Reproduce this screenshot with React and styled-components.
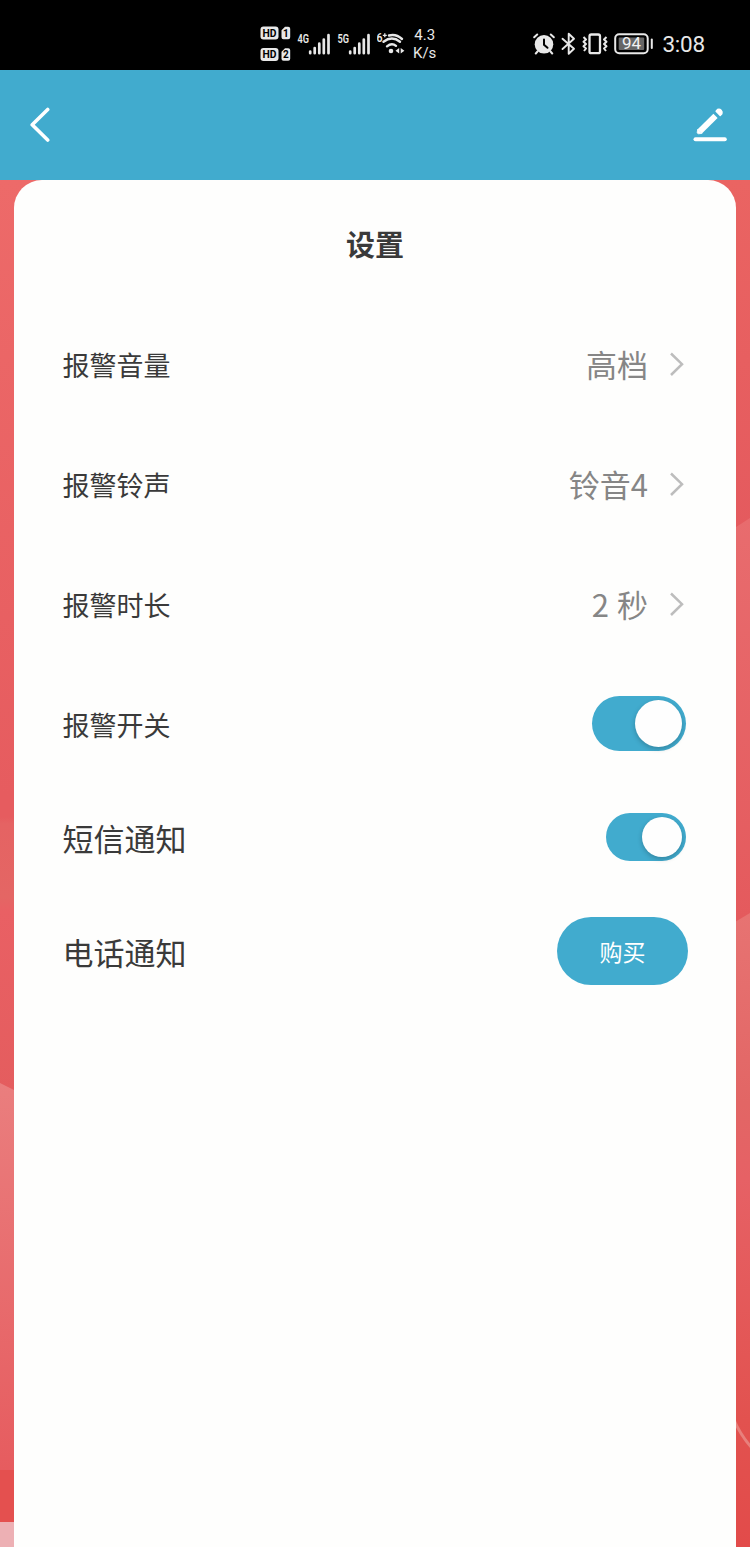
import React from "react";
import styled, { createGlobalStyle } from "styled-components";

const rows = [
  { label: "报警音量", value: "高档" },
  { label: "报警铃声", value: "铃音4" },
  { label: "报警时长", value: "2 秒", spacing: 1 },
];

const SimBadges = () => (
  <svg width="31" height="36" viewBox="0 0 31 36">
    {[1, 2].map((n, i) => (
      <g key={n} transform={`translate(0 ${i * 21.5})`}>
        <rect x="0.5" y="0.5" width="18" height="13" rx="3" fill="#e8e8e8" />
        <text
          x="9.5"
          y="10.900"
          fontSize="11.500"
          fontWeight="700"
          textAnchor="middle"
          textLength="14"
          lengthAdjust="spacingAndGlyphs"
          fill="#000"
        >
          HD
        </text>
        <path
          d="M25 0.800h3.200a2 2 0 0 1 2 2v8.400a2 2 0 0 1-2 2h-4.700a2 2 0 0 1-2-2V4.300z"
          fill="#e8e8e8"
        />
        <text x="25.900" y="10.700" fontSize="10" fontWeight="700" textAnchor="middle" fill="#000">
          {n}
        </text>
      </g>
    ))}
  </svg>
);

const Signal = ({ network }) => (
  <svg width="34" height="24" viewBox="0 0 34 24">
    <text
      x="0.500"
      y="10.500"
      fontSize="12"
      fontWeight="600"
      textLength="11.500"
      lengthAdjust="spacingAndGlyphs"
      fill="#e8e8e8"
    >
      {network}
    </text>
    <path
      d="M13.200 19.500v1.700M17.700 16v5.200M22.300 11.700v9.500M26.800 7.500v13.700M31.500 3.200v18"
      stroke="#e8e8e8"
      strokeWidth="2.700"
      strokeLinecap="round"
    />
  </svg>
);

const Wifi = () => (
  <svg width="29" height="24" viewBox="0 0 29 24" fill="none" stroke="#e8e8e8">
    <text
      x="-0.500"
      y="9.800"
      fontSize="12"
      fontWeight="600"
      textLength="6"
      lengthAdjust="spacingAndGlyphs"
      fill="#e8e8e8"
      stroke="none"
    >
      6
    </text>
    <path d="M5.800 3.300h4M7.800 1.300v4" strokeWidth="1.300" />
    <path d="M12 3.500Q19 1.500 25 7" strokeWidth="2.400" strokeLinecap="round" />
    <path d="M6.500 9.700Q15 3.300 23 9.700" strokeWidth="2.400" strokeLinecap="round" />
    <path d="M10 14.300Q14.800 10.300 19 13.800" strokeWidth="2.400" strokeLinecap="round" />
    <circle cx="14" cy="19" r="2.300" fill="#e8e8e8" stroke="none" />
    <path d="M22.200 16v5.400l-3.700-2.700zM23.700 16v5.400l3.700-2.700z" fill="#e8e8e8" stroke="none" />
  </svg>
);

const Alarm = () => (
  <svg width="22" height="22" viewBox="0 0 22 22" fill="none" stroke="#e8e8e8" strokeLinecap="round">
    <circle cx="11" cy="11.300" r="9.300" fill="#e8e8e8" stroke="none" />
    <path d="M1.200 4.300 4.200 1.500M20.800 4.300 17.800 1.500M4.500 18.500 2.800 20.500M17.500 18.500 19.200 20.500" strokeWidth="2" />
    <path d="M11 6.500v5.300l3.500 3" stroke="#000" strokeWidth="2" />
  </svg>
);

const Bluetooth = () => (
  <svg
    width="15"
    height="24"
    viewBox="0 0 15 24"
    fill="none"
    stroke="#e8e8e8"
    strokeWidth="1.900"
    strokeLinejoin="round"
    strokeLinecap="round"
  >
    <path d="M1.500 6.800 13 16.800 7.700 21.800V1.700L13 6.800 1.500 17" />
  </svg>
);

const Vibrate = () => (
  <svg width="26" height="22" viewBox="0 0 26 22" fill="none" stroke="#e8e8e8" strokeLinejoin="round">
    <rect x="7.500" y="1.500" width="10.500" height="18.700" rx="1.800" strokeWidth="2.300" />
    <path d="M1.500 4 4 6.500 1.500 8.800 4 11 1.500 13.300 4 15.500 2 18" strokeWidth="2" />
    <path d="M24.500 4 22 6.500 24.500 8.800 22 11 24.500 13.300 22 15.500 24 18" strokeWidth="2" />
  </svg>
);

const Battery = () => (
  <svg width="40" height="22" viewBox="0 0 40 22">
    <rect x="1.200" y="1.200" width="32.500" height="19" rx="4" fill="none" stroke="#e8e8e8" strokeWidth="2" />
    <rect x="4.700" y="4.500" width="25.500" height="12.500" rx="1" fill="#666" />
    <text
      x="17.400"
      y="16.300"
      fontSize="16"
      fontWeight="400"
      textAnchor="middle"
      textLength="19"
      lengthAdjust="spacingAndGlyphs"
      fill="#f2f2f2"
    >
      94
    </text>
    <path d="M37.800 6.500v8.500" stroke="#e8e8e8" strokeWidth="2" strokeLinecap="round" />
  </svg>
);

const BackIcon = () => (
  <svg width="24" height="36" viewBox="0 0 24 36" fill="none">
    <path d="M19.700 3.500 4.200 18.700 19.700 34" stroke="#fff" strokeWidth="3.600" strokeLinecap="round" strokeLinejoin="round" />
  </svg>
);

const EditIcon = () => (
  <svg width="34" height="36" viewBox="0 0 34 36" fill="none" stroke="#fff">
    <path d="M6.800 25.300 22.500 9.800" strokeWidth="6" />
    <path d="M4.700 23.200 8.900 27.400 5.500 27.800Q4.200 27.500 4.200 26.500z" fill="#fff" strokeWidth="0.800" strokeLinejoin="round" />
    <path d="M23.100 5.300 27.200 9.400 28.900 7.700A3.300 3.300 0 0 0 24.600 3.500z" fill="#fff" strokeWidth="1.400" strokeLinejoin="round" />
    <path d="M2.500 33.300h29.300" strokeWidth="4" strokeLinecap="round" />
  </svg>
);

const ChevronIcon = () => (
  <svg width="16" height="26" viewBox="0 0 16 26" fill="none">
    <path d="M2 2.500 13 13.200 2 24" stroke="#bdbdbd" strokeWidth="2.500" />
  </svg>
);

const WallpaperArt = () => (
  <Wallpaper viewBox="0 0 750 1367" preserveAspectRatio="none">
    <defs>
      <linearGradient id="left" x1="0" y1="0" x2="0" y2="1">
        <stop offset="0" stopColor="#ed6a69" />
        <stop offset="0.450" stopColor="#e65c5f" />
        <stop offset="0.466" stopColor="#e65c5f" />
        <stop offset="0.471" stopColor="#e56363" />
        <stop offset="0.525" stopColor="#e46664" />
        <stop offset="0.535" stopColor="#e96064" />
        <stop offset="0.670" stopColor="#e45d5e" />
      </linearGradient>
      <linearGradient id="leftHill" x1="0" y1="0" x2="0" y2="1">
        <stop offset="0" stopColor="#ea7e7e" />
        <stop offset="1" stopColor="#e65c5f" />
      </linearGradient>
      <linearGradient id="right" x1="0" y1="0" x2="0" y2="1">
        <stop offset="0" stopColor="#ea6462" />
        <stop offset="1" stopColor="#e45a5e" />
      </linearGradient>
      <linearGradient id="rightMid" x1="0" y1="0" x2="0" y2="1">
        <stop offset="0" stopColor="#e86c6e" />
        <stop offset="1" stopColor="#e4595c" />
      </linearGradient>
      <linearGradient id="rightLow" x1="0" y1="0" x2="0" y2="1">
        <stop offset="0" stopColor="#e77372" />
        <stop offset="0.300" stopColor="#e26665" />
        <stop offset="0.420" stopColor="#e66165" />
        <stop offset="0.800" stopColor="#e2524f" />
        <stop offset="1" stopColor="#e24b4a" />
      </linearGradient>
    </defs>
    <rect width="375" height="1367" fill="url(#left)" />
    <path d="M0 903 14 910 375 1090V1290H0z" fill="url(#leftHill)" />
    <rect y="1290" width="375" height="53" fill="#e4504f" />
    <rect y="1342" width="375" height="25" fill="#edb0b4" />
    <rect x="375" width="375" height="360" fill="url(#right)" />
    <path d="M730 351 750 338V760H730z" fill="url(#rightMid)" />
    <path d="M730 745 750 733V1367H730z" fill="url(#rightLow)" />
    <path d="M734 1240Q741 1256 752 1268" stroke="#e8807c" strokeWidth="3" fill="none" />
  </Wallpaper>
);

const App = () => {
  return (
    <Screen>
      <GlobalStyle />
      <StatusBar>
        <StatusGroup>
          <SimBadges />
          <Signal network="4G" />
          <Signal network="5G" />
          <Wifi />
          <Speed>
            <span>4.3</span>
            <span>K/s</span>
          </Speed>
        </StatusGroup>
        <StatusGroup>
          <Alarm />
          <Bluetooth />
          <Vibrate />
          <Battery />
          <Clock>3:08</Clock>
        </StatusGroup>
      </StatusBar>
      <Header>
        <IconButton aria-label="返回">
          <BackIcon />
        </IconButton>
        <IconButton aria-label="编辑">
          <EditIcon />
        </IconButton>
      </Header>
      <Content>
        <WallpaperArt />
        <Card>
          <Title>设置</Title>
          {rows.map((row) => (
            <Row key={row.label}>
              <Label>{row.label}</Label>
              <Value $spacing={row.spacing}>
                {row.value}
                <ChevronIcon />
              </Value>
            </Row>
          ))}
          <Row $height={118}>
            <Label $drop={4}>报警开关</Label>
            <Switch $width={94} $height={55} $knob={47} role="switch" aria-checked="true" />
          </Row>
          <Row $height={109}>
            <Label $large>短信通知</Label>
            <Switch $width={80} $height={48} $knob={40} role="switch" aria-checked="true" />
          </Row>
          <Row $height={119}>
            <Label $large>电话通知</Label>
            <BuyButton>购买</BuyButton>
          </Row>
        </Card>
      </Content>
    </Screen>
  );
};

const GlobalStyle = createGlobalStyle`
  body {
    margin: 0;
  }
  * {
    box-sizing: border-box;
  }
  svg {
    display: block;
    flex-shrink: 0;
  }
`;

const Screen = styled.div`
  display: flex;
  flex-direction: column;
  width: 750px;
  height: 1547px;
  overflow: hidden;
  font-family: "Noto Sans CJK SC", sans-serif;
`;

const StatusBar = styled.div`
  display: flex;
  justify-content: space-between;
  height: 70px;
  padding: 18px 45px 0 260px;
  background: #000;
  color: #e8e8e8;
  font-family: Roboto, sans-serif;
`;

const StatusGroup = styled.div`
  display: flex;
  align-items: center;
  gap: 6px;
  height: 52px;
`;

const Speed = styled.div`
  display: flex;
  flex-direction: column;
  align-items: center;
  margin-left: 1px;
  font-size: 15px;
  line-height: 18px;
`;

const Clock = styled.span`
  margin-left: 2px;
  font-size: 22.500px;
  letter-spacing: -0.200px;
`;

const Header = styled.header`
  display: flex;
  align-items: center;
  justify-content: space-between;
  height: 110px;
  padding: 0 23px 0 28px;
  background: #41abce;
`;

const IconButton = styled.button`
  border: none;
  padding: 0 0 2px;
  background: none;
`;

const Content = styled.main`
  display: grid;
  height: 1367px;
`;

const Wallpaper = styled.svg`
  grid-area: 1 / 1;
  width: 750px;
  height: 1367px;
`;

const Card = styled.section`
  grid-area: 1 / 1;
  z-index: 1;
  margin: 0 14px;
  padding: 0 48px;
  border-radius: 28px 28px 0 0;
  background: #fefefd;
`;

const Title = styled.h1`
  margin: 0;
  height: 124px;
  color: #3a3a3a;
  font-size: 29px;
  font-weight: 700;
  line-height: 126px;
  text-align: center;
`;

const Row = styled.div`
  display: flex;
  align-items: center;
  justify-content: space-between;
  height: ${(props) => props.$height || 120}px;
`;

const Label = styled.span`
  padding: ${(props) => props.$drop || 2}px 0 0 0.500px;
  color: #3a3a3a;
  font-size: ${(props) => (props.$large ? 31 : 27)}px;
  line-height: 40px;
`;

const Value = styled.span`
  display: flex;
  align-items: center;
  gap: 21px;
  padding-right: 3px;
  color: #868686;
  font-size: 31px;
  line-height: 40px;
  word-spacing: ${(props) => props.$spacing || 0}px;
`;

const Switch = styled.button`
  display: flex;
  align-items: center;
  justify-content: flex-end;
  width: ${(props) => props.$width}px;
  height: ${(props) => props.$height}px;
  margin: 0 2px 0 0;
  border: none;
  border-radius: 40px;
  padding: 0 4px;
  background: #41abce;
  &::after {
    content: "";
    width: ${(props) => props.$knob}px;
    height: ${(props) => props.$knob}px;
    border-radius: 50%;
    background: #fefefe;
    box-shadow: 0 2px 5px rgba(0, 0, 0, 0.22);
  }
`;

const BuyButton = styled.button`
  width: 131px;
  height: 68px;
  border: none;
  border-radius: 34px;
  padding: 1px 0 0;
  background: #41abce;
  color: #fff;
  font-family: inherit;
  font-size: 23px;
`;

export default App;
